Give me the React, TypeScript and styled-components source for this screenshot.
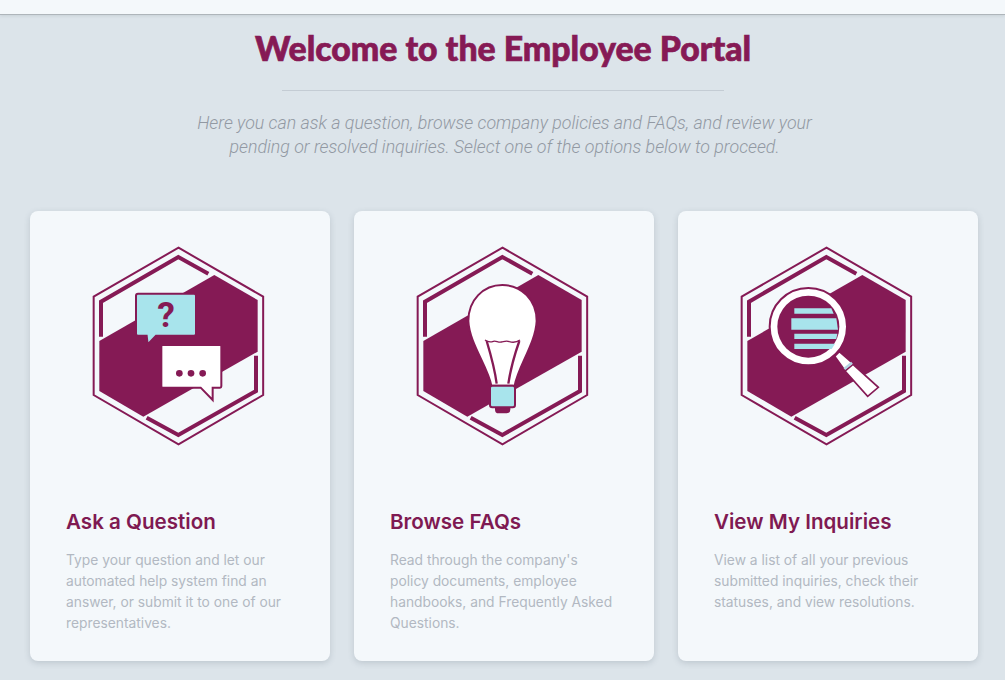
import React from "react";
import styled, { createGlobalStyle } from "styled-components";

const PURPLE = "#851a55";
const CYAN = "#a8e4ec";
const CARD = "#f4f8fb";

const Global = createGlobalStyle`
  html, body { margin: 0; padding: 0; background: #dce4ea; }
  body { height: 680px; overflow: hidden; }
`;
const Page = styled.div`
  display: flex;
  flex-direction: column;
  height: 680px;
  background: #dce4ea;
`;
const TopBar = styled.div`
  height: 14px;
  flex: none;
  background: ${CARD};
  border-bottom: 1px solid #aeb5ba;
  box-shadow: 0 1px 3px rgba(60, 70, 80, 0.12);
`;
const Header = styled.header`
  display: flex;
  flex-direction: column;
  align-items: center;
`;
const Title = styled.h1`
  margin: 11px 0 0 1px;
  font-family: Lato, Roboto, sans-serif;
  font-weight: 900;
  font-size: 33.8px;
  line-height: 44px;
  color: #861a55;
  -webkit-text-stroke: 0.7px #861a55;
`;
const Divider = styled.hr`
  width: 442px;
  height: 1px;
  margin: 20px 0 0;
  border: 0;
  background: #c4ccd4;
`;
const Intro = styled.p`
  margin: 20px 0 0 4px;
  width: 625px;
  text-align: center;
  font-family: Roboto, sans-serif;
  font-style: italic;
  font-weight: 300;
  font-size: 17.8px;
  line-height: 24px;
  color: #9299a3;
`;
const Cards = styled.main`
  display: grid;
  grid-template-columns: repeat(3, 300px);
  gap: 24px;
  padding-left: 30px;
  margin-top: 52px;
`;
const Card = styled.article`
  height: 450px;
  box-sizing: border-box;
  padding: 24px 36px 0;
  background: ${CARD};
  border-radius: 8px;
  box-shadow: 0 2px 6px rgba(70, 85, 100, 0.2);
`;
const IconFrame = styled.svg`
  display: block;
  width: 200px;
  height: 220px;
  margin: 0 14px;
`;
const CardTitle = styled.h2`
  margin: 53px 0 0;
  font-family: Inter, sans-serif;
  font-weight: 600;
  font-size: 20.6px;
  line-height: 28px;
  color: #7f1a52;
`;
const CardText = styled.p`
  margin: 14px 0 0;
  font-family: Inter, sans-serif;
  font-weight: 400;
  font-size: 13.8px;
  line-height: 21px;
  color: #b2b8c2;
`;

const HexBase = ({ children }: { children: React.ReactNode }) => (
  <IconFrame viewBox="0 0 600 660" aria-hidden="true">
    <polygon points="295.5,38 549.5,185 549.5,480 295.5,628 41,480 41,185" fill="none" stroke={PURPLE} strokeWidth="6" />
    <polygon points="403,120 533,195 533,350 190,545 58,468 58,318" fill={PURPLE} />
    <polyline points="63,305 63,200 295,66 385,116" fill="none" stroke={PURPLE} strokeWidth="12" />
    <polyline points="528,362 528,468 295,600 200,548" fill="none" stroke={PURPLE} strokeWidth="12" />
    {children}
  </IconFrame>
);

const GlyphText = styled.text`
  font-family: Roboto, sans-serif;
  font-weight: 700;
  font-size: 106px;
  fill: ${PURPLE};
`;

const ChatIcon = () => (
  <HexBase>
    <path d="M174 176H342Q348 176 348 182V296Q348 302 342 302H228L203 328L200 302H174Q168 302 168 296V182Q168 176 174 176Z" fill={CYAN} stroke={PURPLE} strokeWidth="6" />
    <GlyphText x="258" y="277" textAnchor="middle">?</GlyphText>
    <path d="M248 330H420Q424 330 424 334V454Q424 458 420 458H398V495L362 458H248Q244 458 244 454V334Q244 330 248 330Z" fill="#fff" stroke={PURPLE} strokeWidth="6" />
    <circle cx="298" cy="415" r="10" fill={PURPLE} />
    <circle cx="333" cy="415" r="10" fill={PURPLE} />
    <circle cx="368" cy="415" r="10" fill={PURPLE} />
  </HexBase>
);

const BulbIcon = () => (
  <HexBase>
    <path d="M262 452C252 395 196 325 193 258C193 195 238 150 295 150C352 150 398 195 398 258C395 325 342 395 332 452Z" fill="#fff" stroke={PURPLE} strokeWidth="6" />
    <path d="M243 315C252 322 260 322 268 319C276 316 282 323 292 321C302 319 308 316 316 320C326 323 338 322 348 315" fill="none" stroke={PURPLE} strokeWidth="4" />
    <path d="M248 318C260 358 272 400 278 446M346 318C332 358 320 400 313 446" fill="none" stroke={PURPLE} strokeWidth="7" />
    <path d="M273 515H319V524Q319 535 308 535H284Q273 535 273 524Z" fill={PURPLE} />
    <rect x="258" y="452" width="75" height="65" rx="7" fill={CYAN} stroke={PURPLE} strokeWidth="6" />
  </HexBase>
);

const SearchIcon = () => (
  <HexBase>
    <polygon points="320,364 334,350 378,388 352,408" fill="#fff" stroke={PURPLE} strokeWidth="5" />
    <polygon points="351,408 375,388 451,457 419,484" fill="#fff" stroke={PURPLE} strokeWidth="5" />
    <path d="M349 402L372 383" stroke="#b4d4e4" strokeWidth="8" />
    <circle cx="241" cy="275" r="116" fill="#fff" stroke={PURPLE} strokeWidth="6" />
    <circle cx="241" cy="275" r="93" fill={PURPLE} />
    <polygon points="199,220 310,220 317,236 199,236" fill={CYAN} />
    <polygon points="190,250 325,250 330,284 190,284" fill={CYAN} />
    <polygon points="199,296 328,296 325,312 199,312" fill={CYAN} />
    <polygon points="199,326 321,326 311,342 199,342" fill={CYAN} />
  </HexBase>
);

const items = [
  { title: "Ask a Question", text: "Type your question and let our automated help system find an answer, or submit it to one of our representatives.", icon: <ChatIcon /> },
  { title: "Browse FAQs", text: "Read through the company's policy documents, employee handbooks, and Frequently Asked Questions.", icon: <BulbIcon /> },
  { title: "View My Inquiries", text: "View a list of all your previous submitted inquiries, check their statuses, and view resolutions.", icon: <SearchIcon /> },
];

export default function App() {
  return (
    <Page>
      <Global />
      <TopBar />
      <Header>
        <Title>Welcome to the Employee Portal</Title>
        <Divider />
        <Intro>
          Here you can ask a question, browse company policies and FAQs, and review your pending or resolved inquiries. Select one of the options below to proceed.
        </Intro>
      </Header>
      <Cards>
        {items.map((it) => (
          <Card key={it.title}>
            {it.icon}
            <CardTitle>{it.title}</CardTitle>
            <CardText>{it.text}</CardText>
          </Card>
        ))}
      </Cards>
    </Page>
  );
}
